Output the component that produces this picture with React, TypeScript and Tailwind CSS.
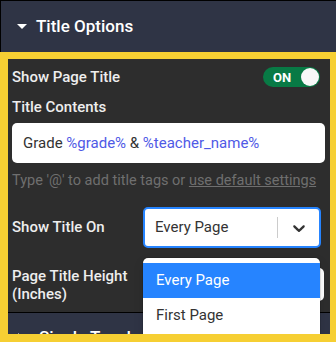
import React from "react";

const Chevron = () => (
  <svg width="20" height="20" viewBox="0 0 20 20" fill="#333333">
    <path d="M4.516 7.548c0.436-0.446 1.043-0.481 1.576 0l3.908 3.747 3.908-3.747c0.533-0.481 1.141-0.446 1.574 0 0.436 0.445 0.408 1.197 0 1.615-0.406 0.418-4.695 4.502-4.695 4.502-0.217 0.223-0.502 0.335-0.787 0.335s-0.57-0.112-0.789-0.335c0 0-4.287-4.084-4.695-4.502s-0.436-1.17 0-1.615z" />
  </svg>
);

export default function App() {
  const font = { fontFamily: "Roboto, 'Noto Sans', sans-serif" };
  return (
    <div className="w-[336px] h-[342px] overflow-hidden bg-[#2f3445]" style={font}>
      <div className="h-[52px] border-t border-l border-black bg-[#2f3445] flex items-center">
        <div className="ml-[16px] w-0 h-0 border-l-[5px] border-r-[5px] border-t-[5px] border-l-transparent border-r-transparent border-t-white" />
        <span className="ml-[9px] text-[17px] text-white font-medium">Title Options</span>
      </div>
      <div className="relative h-[290px] overflow-hidden border-[#f6cf33] border-l-8 border-t-[7px] border-r-[6px] border-b-8">
        <div className="h-[253px] bg-[#2d2d2d] pl-[4px] pr-[5px] pt-[8px] flex flex-col">
          <div className="h-[20px] flex items-center justify-between">
            <span className="text-[15px] leading-[20px] font-medium text-[#eeeeee]">Show Page Title</span>
            <div className="mr-[5px] w-[57px] h-[20px] rounded-full bg-[#087a45] flex items-center justify-between pl-[10px] pr-[1px]">
              <span className="text-[13px] font-bold text-white leading-none">ON</span>
              <div className="w-[18px] h-[18px] rounded-full bg-[#f8f8f8]" />
            </div>
          </div>
          <div className="mt-[10px] h-[20px] text-[15px] leading-[20px] font-medium text-[#eeeeee]">Title Contents</div>
          <div className="mt-[6px] h-[40px] bg-white rounded-[5px] flex items-center pl-[11px] text-[15px] text-[#333333]">
            <span>Grade&nbsp;</span>
            <span className="text-[#4f5ae6]">%grade%</span>
            <span>&nbsp;&amp;&nbsp;</span>
            <span className="text-[#4f5ae6]">%teacher_name%</span>
          </div>
          <div className="mt-[8px] h-[20px] text-[14.5px] leading-[20px] text-[#6f6f6f] whitespace-nowrap">
            Type '@' to add title tags or <span className="underline">use default settings</span>
          </div>
          <div className="mt-[16px] h-[41px] flex items-center">
            <span className="w-[131px] text-[15px] font-medium text-[#eeeeee]">Show Title On</span>
            <div className="w-[178px] h-[41px] bg-white border-2 border-[#2684ff] rounded-[5px] flex items-center">
              <span className="flex-1 pl-[10px] text-[15px] text-[#333333]">Every Page</span>
              <div className="w-px h-[21px] bg-[#cccccc]" />
              <div className="ml-[11px] mr-[10px] flex items-center">
                <Chevron />
              </div>
            </div>
          </div>
          <div className="mt-[18px] h-[37px] flex items-center">
            <span className="w-[131px] text-[15px] leading-[18px] font-medium text-[#eeeeee]">
              Page Title Height
              <br />
              (Inches)
            </span>
            <div className="w-[181px] h-[33px] bg-white rounded-[5px]" />
          </div>
        </div>
        <div className="h-[51px] border-t border-black bg-[#2f3445] flex items-center">
          <div className="ml-[10px] w-0 h-0 border-t-[5px] border-b-[5px] border-l-[5px] border-t-transparent border-b-transparent border-l-white" />
          <span className="ml-[16px] text-[17px] text-white font-medium">Single Teacher Options</span>
        </div>
        <div className="absolute left-[135px] top-[199px] w-[177px] bg-white rounded-[5px] shadow-[0_0_0_1px_rgba(0,0,0,0.1),0_4px_11px_rgba(0,0,0,0.1)] pt-[5px] pb-[4px]">
          <div className="h-[35px] bg-[#2684ff] flex items-center pl-[13px] text-[15px] text-white">Every Page</div>
          <div className="h-[35px] flex items-center pl-[13px] text-[15px] text-[#333333]">First Page</div>
          <div className="h-[35px] flex items-center pl-[13px] text-[15px] text-[#333333]">Last Page</div>
        </div>
      </div>
    </div>
  );
}
